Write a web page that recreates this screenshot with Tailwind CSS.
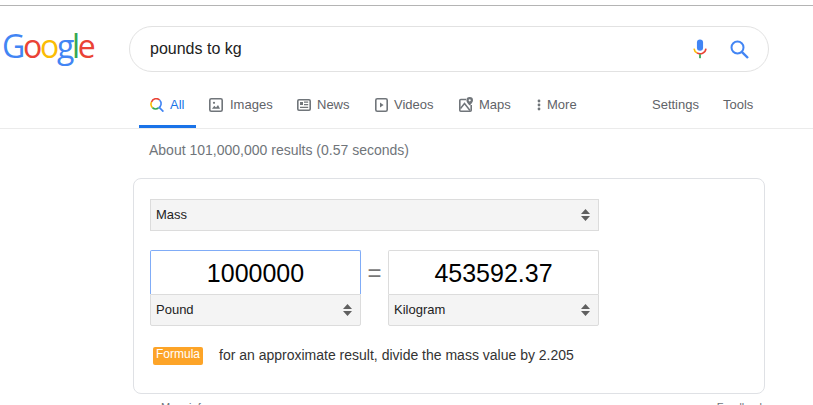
<!doctype html>
<html lang="en">
<head>
<meta charset="utf-8">
<title>pounds to kg - Google Search</title>
<script src="https://cdn.jsdelivr.net/npm/@tailwindcss/browser@4"></script>
</head>
<body class="bg-white overflow-hidden font-['Liberation_Sans',Arial,sans-serif]">
<div class="w-[813px] h-[405px] overflow-hidden">
  <div class="h-[5px]"></div>
  <div class="h-[1px] bg-[#b4b4b4]"></div>
  <header class="flex items-start h-[66px] pt-[20px]">
    <div class="w-[129px] h-[46px] flex items-center pl-[2px] pb-[6px]">
      <span class="font-['Open_Sans',sans-serif] font-medium text-[32px] leading-none tracking-[-2.3px]"><span class="text-[#4285f4]">G</span><span class="text-[#ea4335]">o</span><span class="text-[#fbbc05]">o</span><span class="text-[#4285f4]">g</span><span class="text-[#34a853]">l</span><span class="text-[#ea4335]">e</span></span>
    </div>
    <div class="w-[640px] h-[46px] rounded-full border border-[#e2e2e2] flex items-center pl-[20px] pr-[19px]">
      <span class="flex-1 text-[16px] text-[#222]">pounds to kg</span>
      <svg class="mr-[23px]" width="14" height="20" viewBox="0 0 16 22"><rect x="4.5" y="0" width="7" height="13" rx="3.500" fill="#4285f4"/><path d="M1.200 10.500a6.800 6.800 0 0 0 3.300 5" fill="none" stroke="#fbbc05" stroke-width="1.800"/><path d="M4.500 15.500a6.800 6.800 0 0 0 10.300-5" fill="none" stroke="#ea4335" stroke-width="1.800"/><rect x="7" y="17" width="2" height="4.500" fill="#34a853"/></svg>
      <svg width="19" height="19" viewBox="0 0 19 19" fill="none" stroke="#4285f4" stroke-width="2"><circle cx="7.500" cy="7.500" r="6"/><path d="M11.800 11.800 18 18" stroke-width="2.400"/></svg>
    </div>
  </header>
  <nav class="h-[57px] border-b border-[#ebebeb] pl-[139px] flex text-[13px] text-[#5f6368]">
    <a class="relative w-[57px] h-[56px] flex items-center pl-[11px] pt-[9px] gap-[6px] text-[#1a73e8]">
      <svg width="14" height="14" viewBox="0 0 14 14" fill="none" stroke-width="1.600"><path d="M9.600 2A5 5 0 0 0 1.500 4" stroke="#ea4335"/><path d="M1.500 4A5 5 0 0 0 2.400 9.600" stroke="#fbbc05"/><path d="M2.400 9.600A5 5 0 0 0 8.500 10" stroke="#34a853"/><path d="M8.500 10A5 5 0 0 0 9.600 2" stroke="#4285f4"/><path d="M9 9.200 13.400 13.600" stroke="#4285f4" stroke-width="1.800"/></svg>
      <span>All</span>
      <span class="absolute left-0 bottom-0 w-[57px] h-[3px] bg-[#1a73e8]"></span>
    </a>
    <a class="flex items-center ml-[13px] pt-[9px] gap-[7px]">
      <svg width="14" height="14" viewBox="0 0 14 14"><rect x="0.800" y="0.800" width="12.400" height="12.400" rx="1.500" fill="none" stroke="#70757a" stroke-width="1.600"/><path d="M3 10.700 5.300 7.700 7 9.600 9 7l2 3.700z" fill="#70757a"/><circle cx="5" cy="4.800" r="1.100" fill="#70757a"/></svg>
      <span class="w-[43px]">Images</span>
    </a>
    <a class="flex items-center ml-[24px] pt-[9px] gap-[6px]">
      <svg width="14" height="12" viewBox="0 0 14 12"><rect x="0.800" y="0.800" width="12.400" height="10.400" rx="1.200" fill="none" stroke="#70757a" stroke-width="1.600"/><rect x="3" y="3" width="3" height="3" fill="#70757a"/><path d="M7 3.200h4.200M7 5.600h4.200M3 8.300h8.200" stroke="#70757a" stroke-width="1.200"/></svg>
      <span class="w-[33px]">News</span>
    </a>
    <a class="flex items-center ml-[25px] pt-[9px] gap-[6px]">
      <svg width="13" height="14" viewBox="0 0 13 14"><rect x="0.800" y="0.800" width="11.400" height="12.400" rx="1.500" fill="none" stroke="#70757a" stroke-width="1.600"/><path d="M5 4.500v5l3.600-2.500z" fill="#70757a"/></svg>
      <span class="w-[40px]">Videos</span>
    </a>
    <a class="flex items-center ml-[25px] pt-[9px] gap-[6px]">
      <svg width="14" height="15" viewBox="0 0 14 15"><path d="M7 2.500H1.800a1 1 0 0 0-1 1v9.700a1 1 0 0 0 1 1h9.400a1 1 0 0 0 1-1V8" fill="none" stroke="#70757a" stroke-width="1.600"/><path d="M1.500 11.500 5.500 6.500l5.500 7" fill="none" stroke="#70757a" stroke-width="1.500"/><path d="M10.700 0a3.300 3.300 0 0 0-3.300 3.300c0 2.300 3.300 5.200 3.300 5.200S14 5.600 14 3.300A3.300 3.300 0 0 0 10.700 0z" fill="#70757a"/><circle cx="10.700" cy="3.300" r="1.100" fill="#fff"/></svg>
      <span class="w-[32px]">Maps</span>
    </a>
    <a class="flex items-center ml-[26px] pt-[9px] gap-[6px]">
      <svg width="4" height="12" viewBox="0 0 4 12" fill="#70757a"><circle cx="2" cy="2" r="1.400"/><circle cx="2" cy="6" r="1.400"/><circle cx="2" cy="10" r="1.400"/></svg>
      <span class="w-[30px]">More</span>
    </a>
    <a class="flex items-center ml-[75px] pt-[9px] w-[47px]">Settings</a>
    <a class="flex items-center ml-[24px] pt-[9px]">Tools</a>
  </nav>
  <div class="pl-[149px] pt-[12px] h-[49px] text-[14px] leading-[18px] text-[#70757a]">About 101,000,000 results (0.57 seconds)</div>
  <section class="ml-[133px] w-[632px] h-[216px] rounded-[8px] border border-[#dfe1e5] pl-[16px] pt-[20px] text-[#222]">
    <div class="w-[449px] h-[32px] bg-[#f4f4f4] border border-[#dcdcdc] flex items-center justify-between pl-[5px] pr-[8px] text-[13px]">
      <span>Mass</span>
      <svg width="9" height="12" viewBox="0 0 9 12" fill="#606060"><path d="M4.500 0 9 5H0zM0 7h9l-4.500 5z"/></svg>
    </div>
    <div class="flex items-start mt-[19px]">
      <div class="w-[211px]">
        <div class="h-[44px] w-[211px] rounded-t-[2px] border border-[#80acf7] border-b-0 flex items-center justify-center pt-[2px] text-[25px] text-black bg-white">1000000</div>
        <div class="h-[32px] w-[211px] bg-[#f4f4f4] border border-[#dcdcdc] rounded-b-[2px] flex items-center justify-between pl-[5px] pr-[8px] text-[13px]">
          <span>Pound</span>
          <svg width="9" height="12" viewBox="0 0 9 12" fill="#606060"><path d="M4.500 0 9 5H0zM0 7h9l-4.500 5z"/></svg>
        </div>
      </div>
      <div class="w-[27px] h-[44px] flex items-center justify-center pt-[2px] text-[24px] text-[#777]">=</div>
      <div class="w-[211px]">
        <div class="h-[44px] w-[211px] rounded-t-[2px] border border-[#dcdcdc] border-b-0 flex items-center justify-center pt-[2px] text-[25px] text-black bg-white">453592.37</div>
        <div class="h-[32px] w-[211px] bg-[#f4f4f4] border border-[#dcdcdc] rounded-b-[2px] flex items-center justify-between pl-[5px] pr-[8px] text-[13px]">
          <span>Kilogram</span>
          <svg width="9" height="12" viewBox="0 0 9 12" fill="#606060"><path d="M4.500 0 9 5H0zM0 7h9l-4.500 5z"/></svg>
        </div>
      </div>
    </div>
    <div class="flex items-center mt-[19px] ml-[3px]">
      <span class="h-[18px] w-[50px] rounded-[2px] bg-[#fda428] text-white text-[12px] leading-[15px] text-center">Formula</span>
      <span class="ml-[16px] text-[14px] text-[#333]">for an approximate result, divide the mass value by 2.205</span>
    </div>
  </section>
  <div class="w-[632px] ml-[133px] flex justify-between pl-[28px] pt-[6px] text-[11px] text-[#70757a] leading-[14px]">
    <span>More info</span><span>Feedback</span>
  </div>
</div>
</body>
</html>
